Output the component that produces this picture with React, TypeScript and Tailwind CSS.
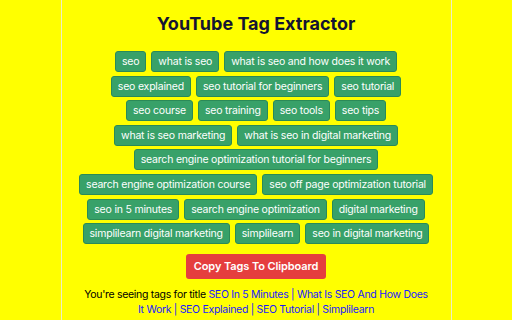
const tags = [
  "seo",
  "what is seo",
  "what is seo and how does it work",
  "seo explained",
  "seo tutorial for beginners",
  "seo tutorial",
  "seo course",
  "seo training",
  "seo tools",
  "seo tips",
  "what is seo marketing",
  "what is seo in digital marketing",
  "search engine optimization tutorial for beginners",
  "search engine optimization course",
  "seo off page optimization tutorial",
  "seo in 5 minutes",
  "search engine optimization",
  "digital marketing",
  "simplilearn digital marketing",
  "simplilearn",
  "seo in digital marketing",
];

export default function App() {
  return (
    <main
      className="flex h-[320px] w-[512px] justify-center overflow-hidden bg-[#ffff00]"
      style={{ fontFamily: "Inter, 'Noto Sans', sans-serif" }}
    >
      <div className="flex h-full w-[391px] flex-col items-center border-x border-[#ececc8]">
        <h1 className="mt-[12px] text-[18px] font-bold leading-[24px] text-[#141433]">
          YouTube Tag Extractor
        </h1>

        <div className="mt-[15px] flex w-[357px] flex-wrap justify-center gap-x-[5px] gap-y-[3.6px]">
          {tags.map((t) => (
            <span
              key={t}
              className="rounded-[3px] border border-[#2a8a58] bg-[#38a169] px-[6px] text-[10.5px] leading-[19px] tracking-[-0.2px] text-white"
            >
              {t}
            </span>
          ))}
        </div>

        <button className="mt-[10px] rounded-[3px] bg-[#e53e3e] px-[8px] text-[11px] font-semibold leading-[25px] tracking-[-0.1px] text-white">
          Copy Tags To Clipboard
        </button>

        <p className="mt-[8px] w-[348px] text-center text-[10.5px] leading-[15px] tracking-[-0.3px] text-black">
          You're seeing tags for title{" "}
          <a className="text-[#1a1aff]" href="#">
            SEO In 5 Minutes | What Is SEO And How Does It Work | SEO Explained | SEO Tutorial | Simplilearn
          </a>
        </p>
      </div>
    </main>
  );
}
